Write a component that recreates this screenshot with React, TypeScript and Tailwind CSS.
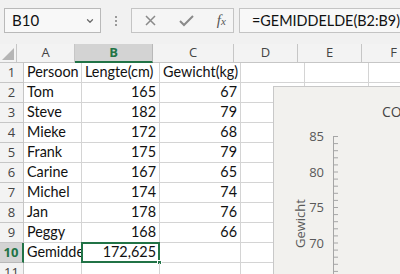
import { ChevronDown } from 'lucide-react';

const COLS = [
  { key: 'A', w: 'w-[58px]' },
  { key: 'B', w: 'w-[78px]' },
  { key: 'C', w: 'w-[81px]' },
  { key: 'D', w: 'w-[64px]' },
  { key: 'E', w: 'w-[64px]' },
  { key: 'F', w: 'w-[64px]' },
];

const ROWS: [string, string, string][] = [
  ['Persoon', 'Lengte(cm)', 'Gewicht(kg)'],
  ['Tom', '165', '67'],
  ['Steve', '182', '79'],
  ['Mieke', '172', '68'],
  ['Frank', '175', '79'],
  ['Carine', '167', '65'],
  ['Michel', '174', '74'],
  ['Jan', '178', '76'],
  ['Peggy', '168', '66'],
  ['Gemiddelde', '172,625', ''],
  ['', '', ''],
];

const CELL = "font-['Lato','Liberation_Sans',sans-serif] text-[14.4px] text-[#111]";

function FormulaBar() {
  return (
    <div className="h-[44px] flex items-start pt-[8px] pl-[4px] bg-[#f1f1f1]">
      <div className="w-[101px] h-[25px] border border-[#b9b9b9] bg-[#f8f8f8] flex items-center justify-between pl-[7px] pr-[5px]">
        <span className={`${CELL} text-[15px]`}>B10</span>
        <ChevronDown className="w-[10px] h-[10px] text-[#6b6b6b]" strokeWidth={3} />
      </div>
      <div className="w-[31px] h-[25px] flex flex-col items-center justify-center gap-[2px]">
        <span className="w-[2px] h-[2px] bg-[#9a9a9a]" />
        <span className="w-[2px] h-[2px] bg-[#9a9a9a]" />
        <span className="w-[2px] h-[2px] bg-[#9a9a9a]" />
      </div>
      <div className="w-[108px] h-[25px] border border-[#c4c4c4] bg-[#f5f5f5] flex items-center">
        <svg width="36" height="23" viewBox="0 0 36 23" className="ml-[8px]">
          <path d="M6 7 L15 16 M15 7 L6 16" stroke="#8a8a8a" strokeWidth="1.5" fill="none" />
        </svg>
        <svg width="36" height="23" viewBox="0 0 36 23">
          <path d="M4 12 L8 16 L17 7" stroke="#8a8a8a" strokeWidth="2" fill="none" />
        </svg>
        <span className="ml-[5px] font-['Liberation_Serif',serif] italic text-[15px] text-[#555] leading-none">
          f<span className="text-[11px]">x</span>
        </span>
      </div>
      <div className="ml-[5px] flex-1 h-[25px] border border-r-0 border-[#c4c4c4] bg-[#f8f8f8] flex items-center pl-[12px]">
        <span className={CELL}>=GEMIDDELDE(B2:B9)</span>
      </div>
    </div>
  );
}

function HeaderRow() {
  return (
    <div className="flex h-[19px] bg-[#f3f3f3] font-['Open_Sans',sans-serif] text-[13px] text-[#444]">
      <div className="w-[24px] h-[19px] border-r border-b border-[#c6c6c6] flex items-end justify-end p-[2px]">
        <svg width="12" height="12" viewBox="0 0 12 12">
          <path d="M12 0 L12 12 L0 12 Z" fill="#b5b5b5" />
        </svg>
      </div>
      {COLS.map((c) => (
        <div
          key={c.key}
          className={`${c.w} shrink-0 h-[19px] border-r flex items-center justify-center ${
            c.key === 'B'
              ? 'bg-[#d3d3d3] border-b-2 border-b-[#217346] border-r-[#b8b8b8] text-[#217346] font-bold'
              : 'border-b border-[#c6c6c6]'
          }`}
        >
          {c.key}
        </div>
      ))}
    </div>
  );
}

function DataRow({ n, row }: { n: number; row: [string, string, string] }) {
  const active = n === 10;
  const numeric = n > 1;
  return (
    <div className="flex h-[20px] bg-white">
      <div
        className={`w-[24px] shrink-0 h-[20px] border-r border-b flex items-center justify-center font-['Open_Sans',sans-serif] text-[13px] ${
          active
            ? 'bg-[#d3d3d3] border-r-2 border-r-[#217346] border-b-[#b8b8b8] text-[#217346] font-bold'
            : 'bg-[#f3f3f3] border-[#c6c6c6] text-[#444]'
        }`}
      >
        {n}
      </div>
      <div className={`w-[58px] shrink-0 h-[20px] border-r border-b border-[#d4d4d4] overflow-hidden whitespace-nowrap flex items-end pl-[3px] pb-[1px] leading-[18px] ${CELL}`}>
        {row[0]}
      </div>
      <div
        className={`w-[78px] shrink-0 h-[20px] border-r border-b border-[#d4d4d4] flex items-end pr-[3px] pb-[1px] leading-[18px] relative ${CELL} ${
          numeric ? 'justify-end' : 'justify-start pl-[3px]'
        }`}
      >
        {row[1]}
        {active && (
          <>
            <div className="absolute -left-[1px] -top-[1px] -right-[1px] -bottom-[1px] border-2 border-[#217346]" />
            <div className="absolute -right-[3px] -bottom-[3px] w-[5px] h-[5px] bg-[#217346] border border-white" />
          </>
        )}
      </div>
      <div
        className={`w-[81px] shrink-0 h-[20px] border-r border-b border-[#d4d4d4] flex items-end pr-[3px] pb-[1px] leading-[18px] ${CELL} ${
          numeric ? 'justify-end' : 'justify-start pl-[3px]'
        }`}
      >
        {row[2]}
      </div>
      <div className="w-[64px] shrink-0 h-[20px] border-r border-b border-[#d4d4d4]" />
      <div className="w-[64px] shrink-0 h-[20px] border-r border-b border-[#d4d4d4]" />
      <div className="w-[64px] shrink-0 h-[20px] border-r border-b border-[#d4d4d4]" />
    </div>
  );
}

function Chart() {
  const ticks = Array.from({ length: 22 }, (_, i) => i);
  const labels = ['85', '80', '75', '70'];
  return (
    <div className="absolute left-[273px] top-[86px] w-[200px] h-[220px] bg-[#f2f1ee] border border-[#c8c8c8] font-['Open_Sans',sans-serif] text-[#595959]">
      <div className="absolute left-[108px] top-[14px] text-[14px] text-[#444] whitespace-nowrap">CORRELATIE</div>
      <svg className="absolute left-0 top-0" width="200" height="220" viewBox="0 0 200 220">
        <line x1="59.5" y1="49" x2="59.5" y2="220" stroke="#a6a6a6" strokeWidth="1" />
        {ticks.map((i) => (
          <line key={i} x1="59" y1={49.5 + i * 7.1} x2="64" y2={49.5 + i * 7.1} stroke="#a6a6a6" strokeWidth="1" />
        ))}
      </svg>
      {labels.map((l, i) => (
        <div
          key={l}
          className="absolute left-[34px] w-[16px] text-right text-[13px] leading-[16px]"
          style={{ top: 41 + i * 35.5 }}
        >
          {l}
        </div>
      ))}
      <div className="absolute left-[4px] top-[131px] w-[44px] text-center text-[13px] leading-[16px] -rotate-90 origin-center">
        Gewicht
      </div>
    </div>
  );
}

export default function App() {
  return (
    <div className="w-[400px] h-[274px] overflow-hidden relative bg-[#f1f1f1]">
      <FormulaBar />
      <HeaderRow />
      {ROWS.map((row, i) => (
        <DataRow key={i} n={i + 1} row={row} />
      ))}
      <Chart />
    </div>
  );
}
